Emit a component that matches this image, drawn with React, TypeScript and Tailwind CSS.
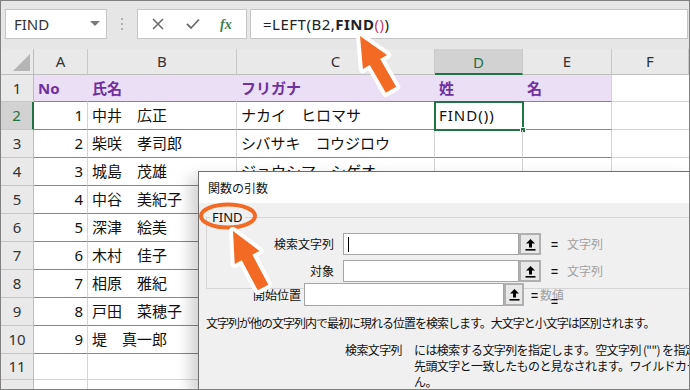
import React from 'react';

const people = [
  ['中井　広正', 'ナカイ　ヒロマサ'],
  ['柴咲　孝司郎', 'シバサキ　コウジロウ'],
  ['城島　茂雄', 'ジョウシマ　シゲオ'],
  ['中谷　美紀子', 'ナカタニ　ミキコ'],
  ['深津　絵美', 'フカツ　エミ'],
  ['木村　佳子', 'キムラ　ヨシコ'],
  ['相原　雅紀', 'アイハラ　マサキ'],
  ['戸田　菜穂子', 'トダ　ナホコ'],
  ['堤　真一郎', 'ツツミ　シンイチロウ'],
];

const colHeads = [
  { k: 'A', w: 'w-[54px]' },
  { k: 'B', w: 'w-[149px]' },
  { k: 'C', w: 'w-[198px]' },
  { k: 'D', w: 'w-[88px]' },
  { k: 'E', w: 'w-[89px]' },
  { k: 'F', w: 'flex-1' },
];

const RefIcon = () => (
  <svg width="11" height="13" viewBox="0 0 11 13">
    <path d="M5.5 1 L10 5.5 H7 V9.5 H4 V5.5 H1 Z" fill="#000" />
    <rect x="0.5" y="11" width="10" height="1.6" fill="#000" />
  </svg>
);

const RowHead = ({ n, active }: { n: number; active?: boolean }) => (
  <div
    className={
      active
        ? 'w-[33px] shrink-0 flex items-center justify-center bg-[#d2d2d2] border-r-2 border-r-[#217346] border-b border-b-[#c8c8c8] text-[15px] text-[#217346]'
        : 'w-[33px] shrink-0 flex items-center justify-center bg-[#e9e9e9] border-r border-r-[#bdbdbd] border-b border-b-[#c8c8c8] text-[15px] text-[#333]'
    }
  >
    {n}
  </div>
);

export default function App() {
  return (
    <div className="relative w-[690px] h-[390px] overflow-hidden border border-[#808080] bg-white font-['Noto_Sans','Noto_Sans_CJK_JP',sans-serif] text-[#111]">
      {/* formula bar */}
      <div className="h-[48px] bg-[#e6e6e6] flex items-start pt-[8px] pl-[4px]">
        <div className="w-[102px] h-[30px] bg-white border border-[#c6c6c6] flex items-center justify-between pl-[8px] pr-[6px]">
          <span className="text-[15px] text-[#333]">FIND</span>
          <svg width="10" height="6" viewBox="0 0 10 6">
            <path d="M0 0 H10 L5 5 Z" fill="#7a7a7a" />
          </svg>
        </div>
        <div className="w-[30px] h-[30px] flex flex-col items-center justify-center gap-[3px]">
          <span className="w-[2px] h-[2px] bg-[#b0b0b0]" />
          <span className="w-[2px] h-[2px] bg-[#b0b0b0]" />
          <span className="w-[2px] h-[2px] bg-[#b0b0b0]" />
        </div>
        <div className="w-[110px] h-[30px] bg-white border border-[#c6c6c6] flex items-center">
          <svg className="ml-[14px]" width="12" height="12" viewBox="0 0 12 12">
            <path d="M1 1 L11 11 M11 1 L1 11" stroke="#6d6d6d" strokeWidth="1.6" />
          </svg>
          <svg className="ml-[22px]" width="14" height="12" viewBox="0 0 14 12">
            <path d="M1 6 L5 10 L13 1.5" stroke="#6d6d6d" strokeWidth="1.8" fill="none" />
          </svg>
          <span className="ml-[20px] text-[14px] italic font-bold text-[#3b7d58] font-['Liberation_Serif',serif]">fx</span>
        </div>
        <div className="flex-1 ml-[3px] mr-[1px] h-[30px] bg-white border border-[#c6c6c6] flex items-center pl-[12px] text-[15px] text-[#222] tracking-[0.5px]">
          <span>=LEFT(B2,</span>
          <span className="font-bold">FIND</span>
          <span className="text-[#c43b6d]">()</span>
          <span>)</span>
        </div>
      </div>

      {/* column headers */}
      <div className="h-[26px] flex bg-[#e9e9e9]">
        <div className="w-[33px] shrink-0 border-r border-r-[#bdbdbd] border-b border-b-[#bdbdbd] flex items-end justify-end pr-[3px] pb-[3px]">
          <svg width="17" height="17" viewBox="0 0 17 17">
            <path d="M17 0 V17 H0 Z" fill="#b5b5b5" />
          </svg>
        </div>
        {colHeads.map((c) => (
          <div
            key={c.k}
            className={
              c.k === 'D'
                ? `${c.w} shrink-0 flex items-center justify-center bg-[#d2d2d2] border-r border-r-[#c8c8c8] border-b-2 border-b-[#217346] text-[15px] text-[#217346] pt-[2px]`
                : `${c.w} shrink-0 flex items-center justify-center border-r border-r-[#c8c8c8] border-b border-b-[#bdbdbd] text-[15px] text-[#333]`
            }
          >
            {c.k}
          </div>
        ))}
      </div>

      {/* row 1 */}
      <div className="h-[27px] flex">
        <RowHead n={1} />
        <div className="w-[54px] shrink-0 bg-[#ebdff5] border-r border-r-[#ebdff5] border-b border-b-[#a468d2] flex items-center pl-[4px] font-bold text-[15px] text-[#7030a0]">No</div>
        <div className="w-[149px] shrink-0 bg-[#ebdff5] border-r border-r-[#ebdff5] border-b border-b-[#a468d2] flex items-center pl-[4px] font-bold text-[15px] text-[#7030a0]">氏名</div>
        <div className="w-[198px] shrink-0 bg-[#ebdff5] border-r border-r-[#ebdff5] border-b border-b-[#a468d2] flex items-center pl-[4px] font-bold text-[15px] text-[#7030a0]">フリガナ</div>
        <div className="w-[88px] shrink-0 bg-[#ebdff5] border-r border-r-[#ebdff5] border-b border-b-[#a468d2] flex items-center pl-[4px] font-bold text-[15px] text-[#7030a0]">姓</div>
        <div className="w-[89px] shrink-0 bg-[#ebdff5] border-r border-r-[#d4d4d4] border-b border-b-[#a468d2] flex items-center pl-[4px] font-bold text-[15px] text-[#7030a0]">名</div>
        <div className="flex-1 border-b border-b-[#d4d4d4]" />
      </div>

      {/* data rows */}
      {people.map(([name, kana], i) => (
        <div key={i} className="h-[28px] flex">
          <RowHead n={i + 2} active={i === 0} />
          <div className="w-[54px] shrink-0 border-r border-r-[#d4d4d4] border-b border-b-[#a468d2] flex items-center justify-end pr-[4px] text-[15px]">{i + 1}</div>
          <div className="w-[149px] shrink-0 border-r border-r-[#d4d4d4] border-b border-b-[#a468d2] flex items-center pl-[4px] text-[15px] whitespace-nowrap">{name}</div>
          <div className="w-[198px] shrink-0 border-r border-r-[#d4d4d4] border-b border-b-[#a468d2] flex items-center pl-[4px] text-[15px] whitespace-nowrap">{kana}</div>
          <div className="relative w-[88px] shrink-0 border-r border-r-[#d4d4d4] border-b border-b-[#a468d2] flex items-center pl-[4px] text-[15px]">
            {i === 0 && (
              <>
                <span className="tracking-[1px]">FIND())</span>
                <div className="absolute -left-px -top-px w-[90px] h-[30px] border-2 border-[#217346]" />
                <div className="absolute -right-[4px] -bottom-[4px] w-[6px] h-[6px] bg-[#217346] border border-white" />
              </>
            )}
          </div>
          <div className="w-[89px] shrink-0 border-r border-r-[#d4d4d4] border-b border-b-[#a468d2]" />
          <div className="flex-1 border-b border-b-[#d4d4d4]" />
        </div>
      ))}

      {/* rows 11, 12 */}
      {[11, 12].map((n) => (
        <div key={n} className={n === 11 ? 'h-[26px] flex' : 'h-[28px] flex'}>
          <RowHead n={n} />
          {colHeads.map((c) => (
            <div key={c.k} className={`${c.w} shrink-0 border-r border-r-[#d4d4d4] border-b border-b-[#d4d4d4]`} />
          ))}
        </div>
      ))}

      {/* dialog */}
      <div className="absolute left-[197px] top-[170px] w-[493px] h-[220px] border-l border-t border-[#6e6e6e] bg-[#f0f0f0] shadow-[-8px_6px_14px_rgba(0,0,0,0.18)] overflow-hidden font-['Noto_Sans_CJK_JP','Noto_Sans',sans-serif] text-[12px] text-[#111]">
        <div className="h-[31px] bg-white flex items-center pl-[9px]">関数の引数</div>
        <div className="px-[7px]">
          <div className="relative mt-[14px] w-[520px] h-[72px] border border-[#d5d5d5] pt-[15px] flex flex-col gap-[5px]">
            <span className="absolute -top-[10px] left-[3px] px-[2px] bg-[#f0f0f0] text-[13px] leading-[18px] font-['Noto_Sans',sans-serif]">FIND</span>
            {['検索文字列', '対象'].map((l) => (
              <div key={l} className="flex items-center h-[22px]">
                <div className="w-[127px] text-right">{l}</div>
                <div className="ml-[9px] w-[176px] h-[22px] bg-white border border-[#a5a5a5] flex items-center pl-[4px]">
                  {l === '検索文字列' && <span className="w-px h-[15px] bg-black" />}
                </div>
                <div className="w-[22px] h-[22px] bg-[#e8e8e8] border-2 border-[#b0b0b0] flex items-center justify-center">
                  <RefIcon />
                </div>
                <span className="ml-[10px] font-bold">=</span>
                <span className="ml-[9px] text-[#a0a0a0]">文字列</span>
              </div>
            ))}
          </div>
          <div className="relative -mt-[6px] flex items-center h-[23px]">
            <div className="w-[95px] text-right">開始位置</div>
            <div className="ml-[3px] w-[200px] h-[23px] bg-white border border-[#a5a5a5]" />
            <div className="w-[20px] h-[23px] bg-[#e8e8e8] border-2 border-[#b0b0b0] flex items-center justify-center">
              <RefIcon />
            </div>
            <span className="ml-[7px] font-bold">=</span>
            <span className="ml-[2px] text-[#a0a0a0]">数値</span>
            <span className="absolute left-[345px] top-[12px] font-bold leading-[12px]">=</span>
          </div>
          <div className="mt-[9px] leading-[16px] whitespace-nowrap tracking-[-1px]">
            文字列が他の文字列内で最初に現れる位置を検索します。大文字と小文字は区別されます。
          </div>
          <div className="mt-[11px] flex leading-[16px] whitespace-nowrap tracking-[-0.6px]">
            <div className="w-[208px] shrink-0 text-right pr-[12px]">検索文字列</div>
            <div className="flex flex-col">
              <span>には検索する文字列を指定します。空文字列 ("") を指定すると、検索文字列の</span>
              <span>先頭文字と一致したものと見なされます。ワイルドカード文字は使用できませ</span>
              <span>ん。</span>
            </div>
          </div>
        </div>
      </div>

      {/* callouts */}
      <svg className="absolute -left-px -top-px pointer-events-none" width="690" height="390" viewBox="0 0 690 390">
        <ellipse cx="228" cy="216" rx="27" ry="11.5" fill="none" stroke="#f26a24" strokeWidth="4" />
        <g transform="translate(360 36) rotate(-30)">
          <path
            d="M0 0 L14 30 L6 30 L6 62 L-6 62 L-6 30 L-14 30 Z"
            fill="#f26a24"
            stroke="#fff"
            strokeWidth="8"
            strokeLinejoin="round"
            paintOrder="stroke"
          />
        </g>
        <g transform="translate(233 231) rotate(-28)">
          <path
            d="M0 0 L14 30 L6 30 L6 64 L-6 64 L-6 30 L-14 30 Z"
            fill="#f26a24"
            stroke="#fff"
            strokeWidth="8"
            strokeLinejoin="round"
            paintOrder="stroke"
          />
        </g>
      </svg>
    </div>
  );
}
